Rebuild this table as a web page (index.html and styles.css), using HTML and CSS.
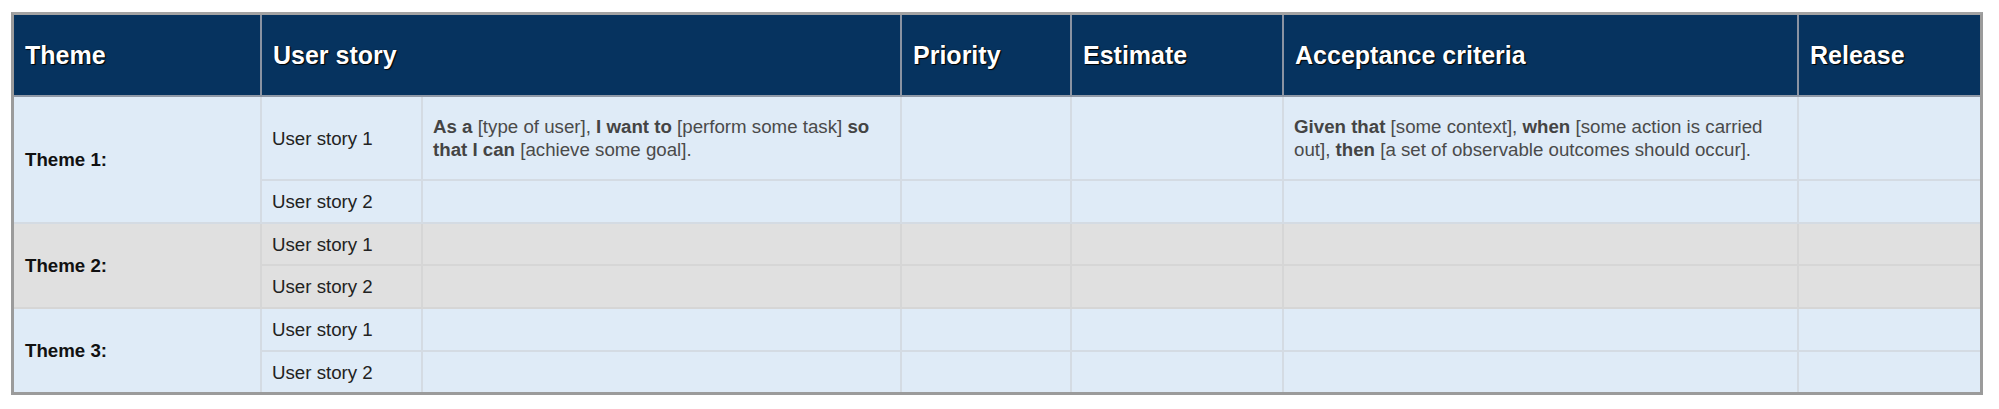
FILE: index.html
```html
<!DOCTYPE html>
<html lang="en">
<head>
<meta charset="utf-8">
<title>User stories</title>
<link rel="stylesheet" href="styles.css">
</head>
<body>
<div class="frame">
  <table class="stories">
    <colgroup>
      <col class="c-theme">
      <col class="c-story">
      <col class="c-desc">
      <col class="c-priority">
      <col class="c-estimate">
      <col class="c-accept">
      <col class="c-release">
    </colgroup>
    <thead>
      <tr class="r-head">
        <th>Theme</th>
        <th colspan="2">User story</th>
        <th>Priority</th>
        <th>Estimate</th>
        <th>Acceptance criteria</th>
        <th class="last">Release</th>
      </tr>
    </thead>
    <tbody>
      <tr class="blue r-tall">
        <td class="theme" rowspan="2">Theme 1:</td>
        <td class="story">User story 1</td>
        <td class="text desc"><b>As a</b> [type of user], <b>I want to</b> [perform some task] <b>so that I can</b> [achieve some goal].</td>
        <td></td>
        <td></td>
        <td class="text accept"><b>Given that</b> [some context], <b>when</b> [some action is carried out], <b>then</b> [a set of observable outcomes should occur].</td>
        <td class="last"></td>
      </tr>
      <tr class="blue r2">
        <td class="story">User story 2</td>
        <td></td><td></td><td></td><td></td><td class="last"></td>
      </tr>
      <tr class="grey r3">
        <td class="theme" rowspan="2">Theme 2:</td>
        <td class="story">User story 1</td>
        <td></td><td></td><td></td><td></td><td class="last"></td>
      </tr>
      <tr class="grey r4">
        <td class="story">User story 2</td>
        <td></td><td></td><td></td><td></td><td class="last"></td>
      </tr>
      <tr class="blue r5">
        <td class="theme bottom" rowspan="2">Theme 3:</td>
        <td class="story">User story 1</td>
        <td></td><td></td><td></td><td></td><td class="last"></td>
      </tr>
      <tr class="blue r6 final">
        <td class="story">User story 2</td>
        <td></td><td></td><td></td><td></td><td class="last"></td>
      </tr>
    </tbody>
  </table>
</div>
</body>
</html>
```

FILE: styles.css
```css
html, body {
  margin: 0;
  padding: 0;
  background: #ffffff;
}

body {
  font-family: "Liberation Sans", Arial, Helvetica, sans-serif;
}

.frame {
  margin: 12px 0 0 11px;
  width: 1966px;
  border: 3px solid #9b9b9b;
  border-top-color: #a3a3a3;
}

.stories {
  width: 1966px;
  table-layout: fixed;
  border-collapse: separate;
  border-spacing: 0;
}

.c-theme { width: 248px; }
.c-story { width: 161px; }
.c-desc { width: 479px; }
.c-priority { width: 170px; }
.c-estimate { width: 212px; }
.c-accept { width: 515px; }
.c-release { width: 181px; }

th, td {
  box-sizing: border-box;
  padding: 0 10px 0 11px;
  vertical-align: middle;
  text-align: left;
}

th {
  background: #06335f;
  color: #ffffff;
  font-size: 25px;
  font-weight: bold;
  text-shadow: 1px 1px 1px #000000, 0 0 1px #000000;
  border-right: 2px solid #8a93a2;
  border-bottom: 2px solid #8f98a6;
}

td {
  font-size: 18.7px;
  line-height: 23px;
  color: #222222;
  border-right: 2px solid #d4dbe3;
  border-bottom: 2px solid #d4dbe3;
}

th.last, td.last {
  border-right: none;
}

.final td, td.bottom {
  border-bottom: none;
}

.blue td { background: #dfebf7; }
.grey td {
  background: #e0e0e0;
  border-color: #d6d6d6;
}

.theme {
  font-weight: bold;
  color: #111111;
}

.story {
  color: #222222;
  padding-left: 10px;
}

.text {
  color: #4a4a4a;
  padding-left: 10px;
}

.desc {
  padding-right: 20px;
}

.accept {
  padding-right: 14px;
}

.text b {
  color: #444444;
}

.r-head { height: 82px; }
.r-tall { height: 84px; }
.r2 { height: 43px; }
.r3 { height: 42px; }
.r4 { height: 43px; }
.r5 { height: 43px; }
.r6 { height: 40px; }
```
